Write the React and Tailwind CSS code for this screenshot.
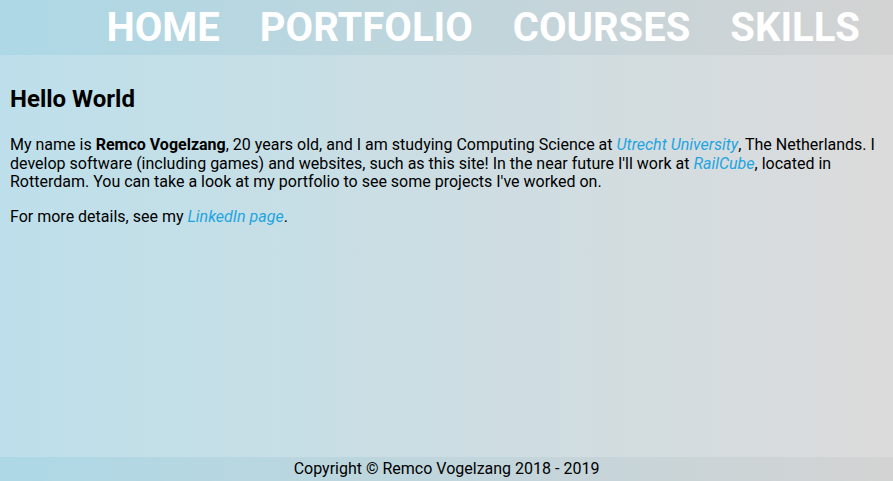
export default function App() {
  const link = "italic text-[#1ea5df]";
  return (
    <div
      className="min-h-screen flex flex-col text-black bg-[linear-gradient(to_right,#add8e6,#d3d3d3)]"
      style={{ fontFamily: "Roboto, 'Liberation Sans', sans-serif" }}
    >
      <header className="h-[55px] flex items-center justify-end gap-[40px] pr-[33px]">
        {["HOME", "PORTFOLIO", "COURSES", "SKILLS"].map((t) => (
          <a key={t} className="text-white font-bold text-[40px] leading-none">
            {t}
          </a>
        ))}
      </header>
      <main className="flex-1 bg-white/20 p-[10px]">
        <h1 className="text-[24px] font-bold mt-[20px] mb-[23px] leading-[28px]">Hello World</h1>
        <p className="text-[16px] leading-[18.5px] mb-[16px]">
          My name is <b>Remco Vogelzang</b>, 20 years old, and I am studying Computing Science at{" "}
          <a className={link}>Utrecht University</a>, The Netherlands. I develop software (including
          games) and websites, such as this site! In the near future I'll work at{" "}
          <a className={link}>RailCube</a>, located in Rotterdam. You can take a look at my portfolio
          to see some projects I've worked on.
        </p>
        <p className="text-[16px] leading-[18.75px]">
          For more details, see my <a className={link}>LinkedIn page</a>.
        </p>
      </main>
      <footer className="h-[24px] flex items-center justify-center text-[16px] leading-[18.75px]">
        Copyright © Remco Vogelzang 2018 - 2019
      </footer>
    </div>
  );
}
